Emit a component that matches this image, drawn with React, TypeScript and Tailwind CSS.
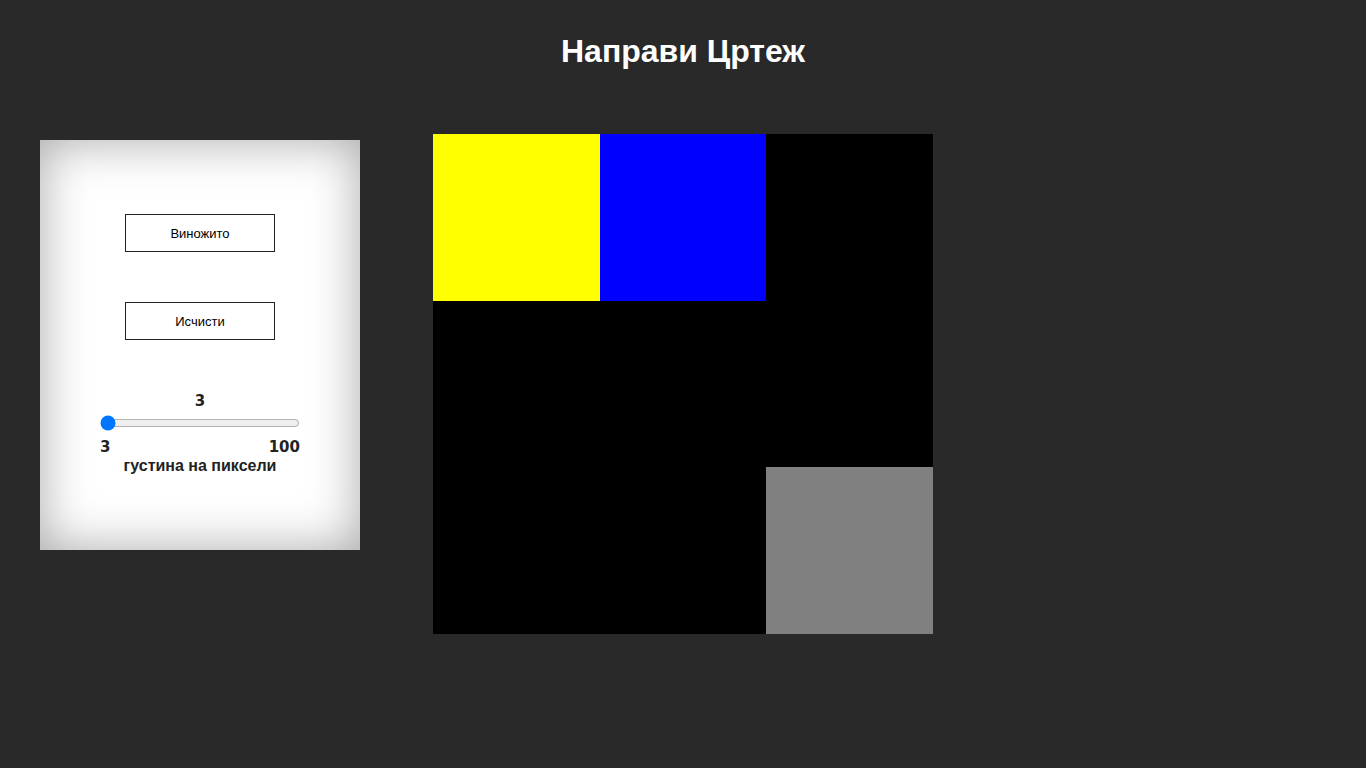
import React from "react";

const cells = [
  "bg-[#ffff00]",
  "bg-[#0000ff]",
  "bg-black",
  "bg-black",
  "bg-black",
  "bg-black",
  "bg-black",
  "bg-black",
  "bg-[#808080]",
];

export default function App() {
  return (
    <div className="min-h-screen bg-[#292929] font-['Liberation_Sans',Arial,sans-serif]">
      <h1 className="pt-[33px] text-center text-[32px] leading-[37px] font-bold text-white">
        Направи Цртеж
      </h1>

      <div className="mt-[64px] flex items-start pl-[40px]">
        <div className="mt-[6px] flex h-[410px] w-[320px] flex-col items-center bg-white pt-[74px] shadow-[inset_0_0_50px_rgba(0,0,0,0.35)]">
          <button className="h-[38px] w-[150px] border border-[#222] bg-white pt-[1px] text-[13px] text-black">
            Виножито
          </button>
          <button className="mt-[50px] h-[38px] w-[150px] border border-[#222] bg-white pt-[1px] text-[13px] text-black">
            Исчисти
          </button>

          <div className="mt-[52px] flex w-[200px] flex-col items-center text-[#222]">
            <span className="font-['DejaVu_Sans',sans-serif] text-[15px] leading-[18px] font-bold">
              3
            </span>
            <input
              type="range"
              min={3}
              max={100}
              defaultValue={3}
              className="mt-[5px] h-[16px] w-[200px] accent-[#0075ff]"
            />
            <div className="mt-[7px] flex w-full justify-between font-['DejaVu_Sans',sans-serif] text-[15px] leading-[18px] font-bold">
              <span>3</span>
              <span>100</span>
            </div>
            <span className="mt-[1px] text-[16px] leading-[18px] font-bold">
              густина на пиксели
            </span>
          </div>
        </div>

        <div className="ml-[73px] grid h-[500px] w-[500px] grid-cols-3 grid-rows-3">
          {cells.map((c, i) => (
            <div key={i} className={c} />
          ))}
        </div>
      </div>
    </div>
  );
}
